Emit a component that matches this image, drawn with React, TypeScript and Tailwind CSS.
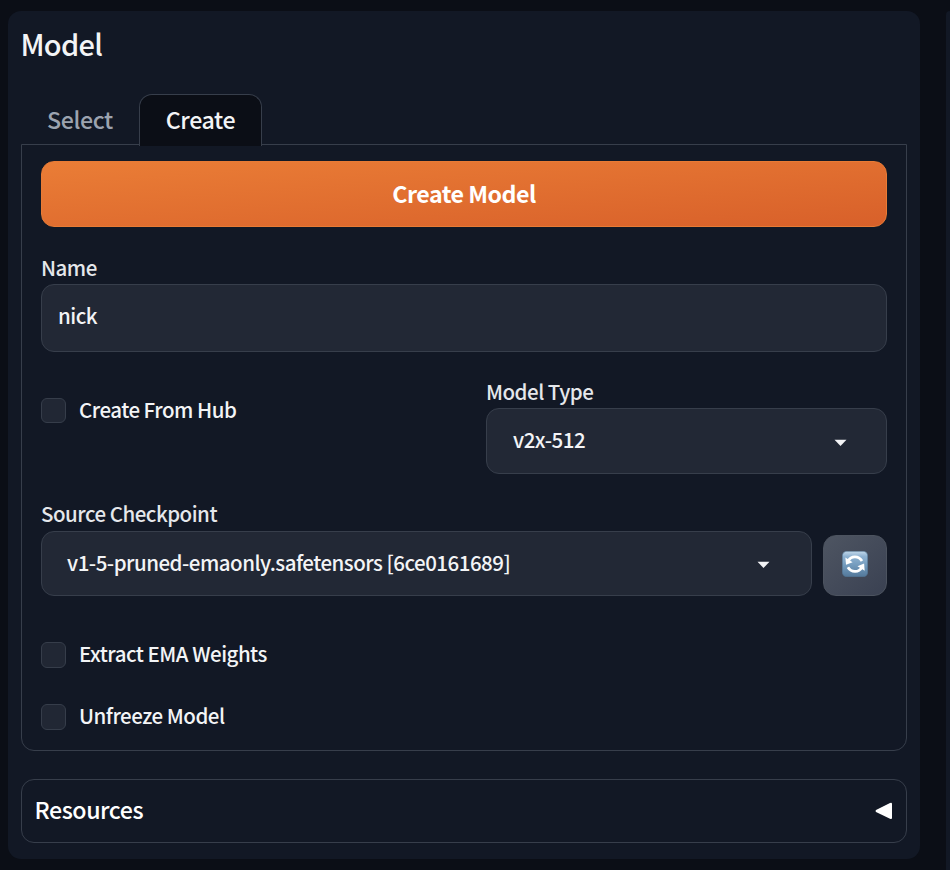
import React from "react";

function Caret() {
  return (
    <svg width="14" height="8" viewBox="0 0 14 8" className="shrink-0" fill="#f3f4f6">
      <path d="M0.5 0.7h12L6.5 7z" />
    </svg>
  );
}

function Label({ children }: { children: React.ReactNode }) {
  return <div className="h-[27px] text-[20.5px] leading-[20px] text-[#e5e7eb]">{children}</div>;
}

function Check({ label, tall = false }: { label: string; tall?: boolean }) {
  return (
    <label className="flex h-[26px] items-center gap-[13px] text-[20.5px] leading-[26px]">
      <span
        className={`${tall ? "h-[26px]" : "h-[25px]"} w-[25px] shrink-0 rounded-[6px] border border-[#363d4a] bg-[#212734]`}
      />
      <span className={tall ? "pb-[5px]" : "pb-[3px]"}>{label}</span>
    </label>
  );
}

function RefreshIcon() {
  return (
    <svg width="26" height="26" viewBox="0 0 26 26" className="mb-[3px]">
      <defs>
        <linearGradient id="tile" x1="0" y1="0" x2="0" y2="1">
          <stop offset="0" stopColor="#c3d8ea" />
          <stop offset="0.2" stopColor="#8fb2d1" />
          <stop offset="0.55" stopColor="#739bbd" />
          <stop offset="1" stopColor="#53789a" />
        </linearGradient>
      </defs>
      <rect x="0.3" y="0.3" width="25.4" height="25.4" rx="4.5" fill="url(#tile)" stroke="#527594" strokeWidth="0.6" />
      <g fill="none" stroke="#fff" strokeWidth="2.8">
        <path d="M6.2 9.9C9 4.9 16.3 4.2 20 10" />
        <path d="M19.8 16.3C17 21.5 9.6 22.2 5.9 16.3" />
      </g>
      <path d="M3.4 6.4L4 13.8L10.6 11.2Z" fill="#fff" />
      <path d="M22.7 19.8L22.1 12.6L15.5 15.2Z" fill="#fff" />
    </svg>
  );
}

export default function App() {
  return (
    <div className="flex h-[870px] w-[950px] justify-between overflow-hidden bg-[#0b0e16] pt-[11px] pl-2 font-['Noto_Sans_CJK_SC','Noto_Sans',sans-serif] tracking-[-0.5px] font-medium text-[#f3f4f6]">
      <main className="h-[848px] w-[912px] rounded-[13px] bg-[#121825] px-[13px]">
        <h1 className="h-[83px] pt-[12px] text-[29px] leading-10 font-medium tracking-[-0.7px]">
          <span className="-ml-[0.5px]">Model</span>
        </h1>
        <div className="flex h-[50px] tracking-[-0.4px]">
          <button className="w-[118px] text-[23.2px] leading-[50px] text-[#9ca3af]">Select</button>
          <button className="relative z-10 h-[52px] w-[123px] rounded-t-[13px] border border-b-0 border-[#373e4b] bg-[#0b0e16] pb-[3px] text-[23.2px] leading-[48px]">
            Create
          </button>
        </div>
        <section className="h-[607px] w-[886px] rounded-b-[13px] border border-[#373e4b] px-[19px] pt-4">
          <button className="block h-[66px] w-full rounded-[13px] border border-[#e87b35] bg-linear-to-br from-[#ea7d36] to-[#d8602a] pb-[2px] text-[23.2px] leading-[62px] font-bold tracking-[-0.5px] text-white">
            Create Model
          </button>
          <div className="mt-[30px]">
            <Label>Name</Label>
            <div className="h-[68px] rounded-[13px] border border-[#373e4b] bg-[#222835] px-4 text-[20.5px] leading-[60px]">nick</div>
          </div>
          <div className="mt-[29px] flex justify-between">
            <div className="pt-[16px]">
              <Check label="Create From Hub" />
            </div>
            <div className="w-[401px]">
              <Label>Model Type</Label>
              <div className="flex h-[66px] items-center justify-between rounded-[13px] border border-[#373e4b] bg-[#222835] pr-[38px] pl-[26px] text-[20.5px]">
                <span className="pb-1">v2x-512</span>
                <span className="pt-[3px]">
                  <Caret />
                </span>
              </div>
            </div>
          </div>
          <div className="mt-[29px]">
            <Label>Source Checkpoint</Label>
            <div className="mt-[1px] flex items-end justify-between">
              <div className="flex h-[65px] w-[771px] items-center justify-between rounded-[13px] border border-[#373e4b] bg-[#222835] pr-10 pl-[25px] text-[20.5px]">
                <span className="pb-[2px]">v1-5-pruned-emaonly.safetensors [6ce0161689]</span>
                <span className="pt-[2px]">
                  <Caret />
                </span>
              </div>
              <button className="flex h-[61px] w-16 items-center justify-center rounded-[13px] border border-[#4c535f] bg-linear-to-br from-[#4e5562] to-[#3a4152]">
                <RefreshIcon />
              </button>
            </div>
          </div>
          <div className="mt-[46px] flex flex-col gap-9">
            <Check label="Extract EMA Weights" tall />
            <Check label="Unfreeze Model" tall />
          </div>
        </section>
        <section className="mt-7 flex h-16 w-[886px] items-center justify-between rounded-[13px] border border-[#373e4b] pr-[13px] pl-[12.5px] text-[23.2px] tracking-[-0.45px] text-white">
          <span className="pb-1">Resources</span>
          <svg width="18" height="18" viewBox="0 0 18 18" fill="#fff">
            <path d="M1 8L15 1.1Q17 0.3 17 2V16Q17 17.5 15 16.8L1 10Q0 9 1 8Z" />
          </svg>
        </section>
      </main>
      <aside className="h-[880px] w-1 rounded-tl-[4px] bg-[#121825]" />
    </div>
  );
}
